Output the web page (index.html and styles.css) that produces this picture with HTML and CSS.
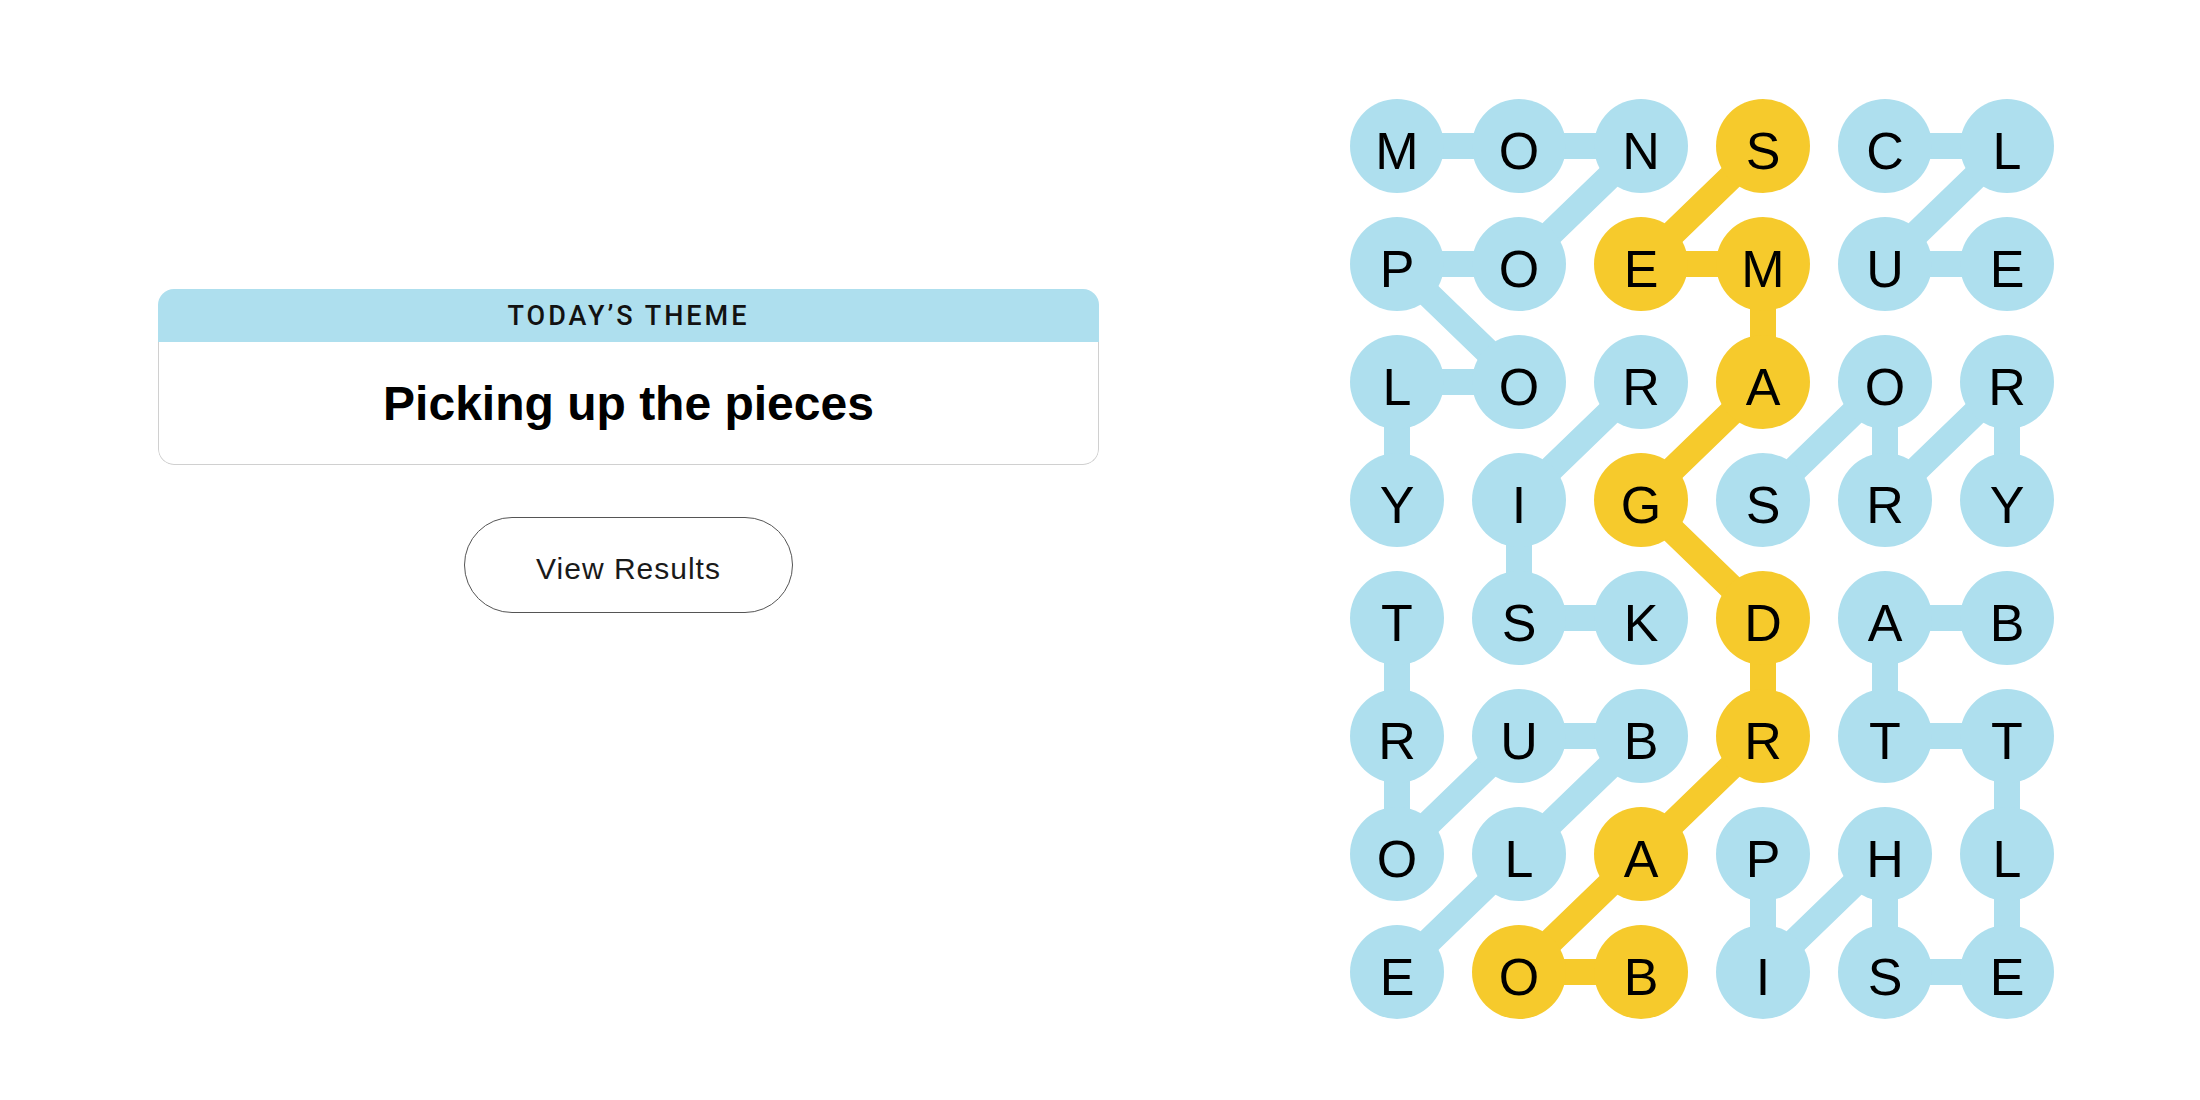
FILE: index.html
```html
<!DOCTYPE html>
<html lang="en">
<head>
  <meta charset="UTF-8" />
  <meta name="viewport" content="width=device-width, initial-scale=1" />
  <title>Strands</title>
  <link rel="stylesheet" href="styles.css">
</head>

<body>
  <main class="page">
    <!-- Theme + results -->
    <section class="panel">
      <div class="theme-card">
        <div class="theme-header">TODAY’S THEME</div>
        <div class="theme-body">
          <h1 class="theme-title">Picking up the pieces</h1>
        </div>
      </div>
      <button type="button" class="results-btn">View Results</button>
    </section>

    <!-- Letter board -->
    <section class="board">
      <div class="board-inner">
        <svg class="paths" width="704" height="920" viewBox="0 0 704 920">
          <g class="word">
            <polyline points="47,47 169,47 291,47 169,165 47,165 169,283 47,283 47,401" />
            <polyline points="535,47 657,47 535,165 657,165" />
            <polyline points="413,401 535,283 535,401 657,283 657,401" />
            <polyline points="291,283 169,401 169,519 291,519" />
            <polyline points="47,519 47,637 47,755 169,637 291,637 169,755 47,873" />
            <polyline points="657,519 535,519 535,637 657,637 657,755 657,873 535,873 535,755 413,873 413,755" />
          </g>
          <g class="spangram">
            <polyline points="291,873 169,873 291,755 413,637 413,519 291,401 413,283 413,165 291,165 413,47" />
          </g>
        </svg>

        <div class="grid">
          <div class="cell">M</div><div class="cell">O</div><div class="cell">N</div><div class="cell span">S</div><div class="cell">C</div><div class="cell">L</div>
          <div class="cell">P</div><div class="cell">O</div><div class="cell span">E</div><div class="cell span">M</div><div class="cell">U</div><div class="cell">E</div>
          <div class="cell">L</div><div class="cell">O</div><div class="cell">R</div><div class="cell span">A</div><div class="cell">O</div><div class="cell">R</div>
          <div class="cell">Y</div><div class="cell">I</div><div class="cell span">G</div><div class="cell">S</div><div class="cell">R</div><div class="cell">Y</div>
          <div class="cell">T</div><div class="cell">S</div><div class="cell">K</div><div class="cell span">D</div><div class="cell">A</div><div class="cell">B</div>
          <div class="cell">R</div><div class="cell">U</div><div class="cell">B</div><div class="cell span">R</div><div class="cell">T</div><div class="cell">T</div>
          <div class="cell">O</div><div class="cell">L</div><div class="cell span">A</div><div class="cell">P</div><div class="cell">H</div><div class="cell">L</div>
          <div class="cell">E</div><div class="cell span">O</div><div class="cell span">B</div><div class="cell">I</div><div class="cell">S</div><div class="cell">E</div>
        </div>
      </div>
    </section>
  </main>
</body>
</html>
```

FILE: styles.css
```css
body {
  margin: 0;
  padding: 0;
  background: #fff;
  color: #121212;
  font-family: "Liberation Sans", Arial, sans-serif;
}

.page {
  display: flex;
  align-items: flex-start;
  padding-left: 158px;
}

/* Left side: theme card and button */
.panel {
  width: 941px;
  padding-top: 289px;
  display: flex;
  flex-direction: column;
  align-items: center;
  gap: 52px;
}

.theme-card {
  width: 100%;
  border-radius: 16px;
  overflow: hidden;
}

.theme-header {
  background: #aedfee;
  height: 53px;
  display: flex;
  align-items: center;
  justify-content: center;
  font-family: Roboto, "Liberation Sans", sans-serif;
  font-weight: 500;
  font-size: 27px;
  letter-spacing: 3px;
  color: #121212;
}

.theme-body {
  height: 122px;
  border: 1px solid #d0d0d0;
  border-top: none;
  border-radius: 0 0 16px 16px;
  display: flex;
  align-items: center;
  justify-content: center;
}

.theme-title {
  margin: 0;
  font-size: 48px;
  font-weight: 700;
  color: #000;
}

.results-btn {
  width: 329px;
  height: 96px;
  background: #fff;
  border: 1.5px solid #555;
  border-radius: 48px;
  font-family: "Liberation Sans", Arial, sans-serif;
  font-size: 30px;
  letter-spacing: 1px;
  color: #1a1a1a;
  padding: 8px 0 0;
  cursor: pointer;
}

/* Right side: the letter board */
.board {
  margin-left: 251px;
  padding-top: 99px;
}

.board-inner {
  position: relative;
  width: 704px;
  height: 920px;
}

.paths {
  position: absolute;
  top: 0;
  left: 0;
}

.paths polyline {
  fill: none;
  stroke-width: 26;
  stroke-linejoin: round;
}

.word polyline {
  stroke: #aedfee;
}

.spangram polyline {
  stroke: #f6ca2c;
}

.grid {
  position: relative;
  display: grid;
  grid-template-columns: repeat(6, 94px);
  grid-auto-rows: 94px;
  column-gap: 28px;
  row-gap: 24px;
}

.cell {
  border-radius: 50%;
  background: #aedfee;
  display: flex;
  align-items: center;
  justify-content: center;
  padding-top: 10px;
  box-sizing: border-box;
  font-size: 52px;
  color: #000;
}

.cell.span {
  background: #f6ca2c;
}
```
